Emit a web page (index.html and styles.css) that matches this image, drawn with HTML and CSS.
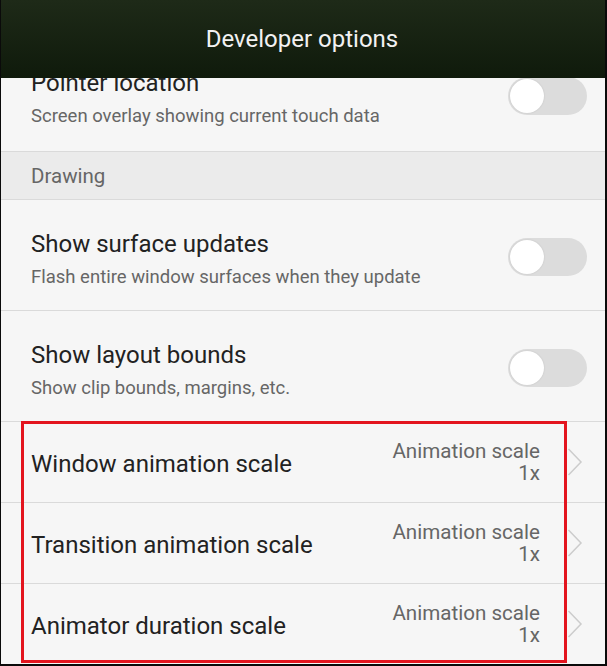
FILE: index.html
```html
<!DOCTYPE html>
<html lang="en">
<head>
    <meta charset="UTF-8">
    <meta name="viewport" content="width=device-width, initial-scale=1.0">
    <title>Developer options</title>
    <link rel="stylesheet" href="styles.css">
</head>
<body>
    <div class="screen">
        <header class="app-bar">
            <h1 class="app-title">Developer options</h1>
        </header>

        <div class="settings-list">
            <div class="setting-row setting-row--scrolled">
                <div class="setting-text">
                    <div class="setting-title">Pointer location</div>
                    <div class="setting-summary">Screen overlay showing current touch data</div>
                </div>
                <div class="switch"><div class="switch-knob"></div></div>
            </div>

            <div class="section-header">Drawing</div>

            <div class="setting-row">
                <div class="setting-text">
                    <div class="setting-title">Show surface updates</div>
                    <div class="setting-summary">Flash entire window surfaces when they update</div>
                </div>
                <div class="switch"><div class="switch-knob"></div></div>
            </div>

            <div class="setting-row">
                <div class="setting-text">
                    <div class="setting-title">Show layout bounds</div>
                    <div class="setting-summary">Show clip bounds, margins, etc.</div>
                </div>
                <div class="switch"><div class="switch-knob"></div></div>
            </div>

            <div class="scale-group">
                <div class="scale-row">
                    <div class="setting-title">Window animation scale</div>
                    <div class="scale-value">Animation scale<br>1x</div>
                    <svg class="chevron" width="16" height="28" viewBox="0 0 16 28"><path d="M1.5 1 L14 14 L1.5 27" fill="none" stroke="#cccccc" stroke-width="1.5"/></svg>
                </div>
                <div class="scale-row">
                    <div class="setting-title">Transition animation scale</div>
                    <div class="scale-value">Animation scale<br>1x</div>
                    <svg class="chevron" width="16" height="28" viewBox="0 0 16 28"><path d="M1.5 1 L14 14 L1.5 27" fill="none" stroke="#cccccc" stroke-width="1.5"/></svg>
                </div>
                <div class="scale-row">
                    <div class="setting-title">Animator duration scale</div>
                    <div class="scale-value">Animation scale<br>1x</div>
                    <svg class="chevron" width="16" height="28" viewBox="0 0 16 28"><path d="M1.5 1 L14 14 L1.5 27" fill="none" stroke="#cccccc" stroke-width="1.5"/></svg>
                </div>
                <div class="highlight"></div>
            </div>
        </div>
    </div>
</body>
</html>
```

FILE: styles.css
```css
* {
    box-sizing: border-box;
}

body {
    margin: 0;
    background-color: #000;
    font-family: 'Roboto', 'Noto Sans', sans-serif;
}

.screen {
    display: flex;
    flex-direction: column;
    width: 607px;
    height: 666px;
    border-left: 1px solid #0a0a0a;
    border-right: 2px solid #0a0a0a;
    border-bottom: 2px solid #0a0a0a;
    background-color: #f6f6f6;
    overflow: hidden;
}

.app-bar {
    position: relative;
    z-index: 2;
    height: 78px;
    flex-shrink: 0;
    display: flex;
    justify-content: center;
    align-items: center;
    background: linear-gradient(#1e2a18, #0f1a0b);
}

.app-title {
    margin: 0 0 0 -2px;
    font-size: 24px;
    font-weight: 400;
    color: #f2f2f2;
}

.settings-list {
    flex: 1;
    overflow: hidden;
}

.setting-row {
    display: flex;
    align-items: center;
    justify-content: space-between;
    height: 111px;
    padding: 8px 18px 0 30px;
    border-bottom: 1px solid #dadada;
}

.setting-row--scrolled {
    margin-top: -39px;
    height: 113px;
    padding-top: 6px;
}

.setting-title {
    font-size: 24px;
    color: #222;
    line-height: 30px;
}

.setting-summary {
    margin-top: 6px;
    font-size: 18.5px;
    color: #666;
    line-height: 24px;
}

.switch {
    width: 79px;
    height: 38px;
    margin-bottom: 5px;
    border-radius: 19px;
    background-color: #dcdcdc;
    padding: 2px;
}

.switch-knob {
    width: 34px;
    height: 34px;
    border-radius: 50%;
    background-color: #fff;
    box-shadow: 0 0 2px rgba(0, 0, 0, 0.12);
}

.section-header {
    height: 48px;
    padding: 12px 30px 0;
    font-size: 20.5px;
    line-height: 24px;
    color: #666;
    background-color: #ebebeb;
    border-bottom: 1px solid #dadada;
}

.scale-group {
    position: relative;
}

.scale-row {
    display: flex;
    align-items: center;
    height: 81px;
    padding: 0 22px 0 30px;
    border-bottom: 1px solid #dadada;
}

.scale-row:last-of-type {
    border-bottom: none;
}

.scale-row .setting-title {
    flex: 1;
    margin-top: 4px;
}

.scale-value {
    font-size: 20.6px;
    line-height: 22px;
    color: #666;
    text-align: right;
}

.chevron {
    margin-left: 27px;
}

.highlight {
    position: absolute;
    top: -1px;
    left: 20px;
    width: 546px;
    height: 242px;
    border: 3px solid #e3141e;
}
```
